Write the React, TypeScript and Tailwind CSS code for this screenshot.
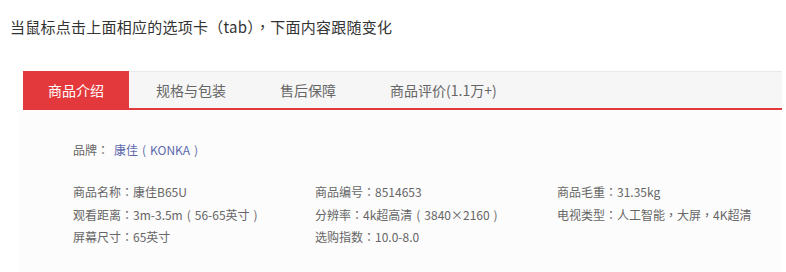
import React from "react";

const font = { fontFamily: '"Noto Sans CJK SC", "Noto Sans", sans-serif' };

function P({ s, centerParens = false }: { s: string; centerParens?: boolean }) {
  const parts = s.split(/([：，（）])/);
  return (
    <>
      {parts.map((p, i) => {
        if (centerParens && (p === "（" || p === "）")) {
          return (
            <span key={i} className="inline-block w-[1em] text-center">
              {p === "（" ? "(" : ")"}
            </span>
          );
        }
        if (/^[：，（）]$/.test(p)) {
          return (
            <span key={i} style={{ fontFamily: '"Noto Sans CJK TC", sans-serif' }}>
              {p}
            </span>
          );
        }
        return <React.Fragment key={i}>{p}</React.Fragment>;
      })}
    </>
  );
}

const tabs = ["规格与包装", "售后保障", "商品评价(1.1万+)"];

const rows: [string, string][][] = [
  [
    ["商品名称：", "康佳B65U"],
    ["商品编号：", "8514653"],
    ["商品毛重：", "31.35kg"],
  ],
  [
    ["观看距离：", "3m-3.5m（56-65英寸）"],
    ["分辨率：", "4k超高清（3840×2160）"],
    ["电视类型：", "人工智能，大屏，4K超清"],
  ],
  [
    ["屏幕尺寸：", "65英寸"],
    ["选购指数：", "10.0-8.0"],
    ["", ""],
  ],
];

export default function App() {
  return (
    <div className="w-[786px] h-[272px] bg-white overflow-hidden flex flex-col" style={font}>
      <div className="pl-[10px] pt-[17px] text-[15px] leading-[20px] tracking-[0.25px] text-[#333]">
        <P s="当鼠标点击上面相应的选项卡（tab），下面内容跟随变化" />
      </div>
      <div className="mt-[34px] ml-[23px] w-[759px] h-[39px] flex bg-[#f6f6f6] border-t border-[#e9e9e9] border-b-2 border-b-[#e4393c]">
        <div className="-mt-px w-[106px] flex items-center justify-center bg-[#e4393c] text-white text-[14px] leading-[20px]">
          商品介绍
        </div>
        {tabs.map((t) => (
          <div key={t} className="px-[27px] flex items-center text-[14px] leading-[20px] text-[#666]">
            {t}
          </div>
        ))}
      </div>
      <div className="ml-[19px] w-[762px] flex-1 bg-[#fcfcfc] pl-[54px] pt-[29px] text-[12px] text-[#666]">
        <div className="leading-[22px] flex">
          <span>
            <P s="品牌：" />
          </span>
          <span className="ml-[5px] text-[#5e69ad]">
            <P s="康佳（KONKA）" centerParens />
          </span>
        </div>
        <div className="mt-[20px] flex flex-col">
          {rows.map((r, i) => (
            <div key={i} className="flex leading-[22.5px]">
              {r.map(([k, v], j) => (
                <div key={j} className={j < 2 ? "w-[242px] shrink-0 whitespace-nowrap" : "flex-1 whitespace-nowrap"}>
                  <P s={k + v} centerParens />
                </div>
              ))}
            </div>
          ))}
        </div>
      </div>
    </div>
  );
}
